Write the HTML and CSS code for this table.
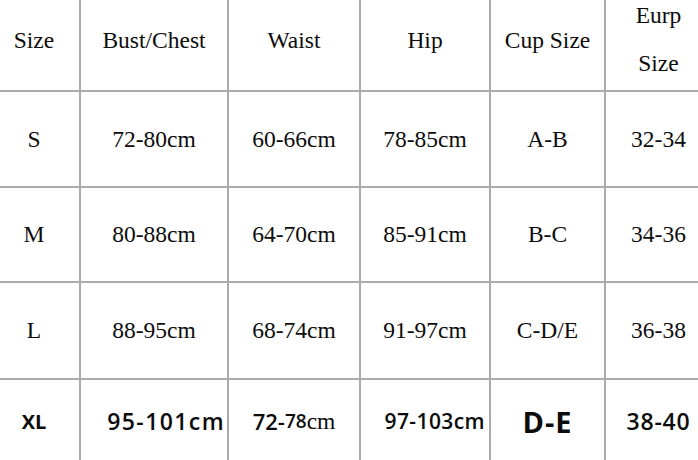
FILE: index.html
```html
<!DOCTYPE html>
<html>
<head>
<meta charset="utf-8">
<link rel="stylesheet" href="styles.css">
</head>
<body>
<div class="table">
  <div class="cell head c1">Size</div>
  <div class="cell head">Bust/Chest</div>
  <div class="cell head">Waist</div>
  <div class="cell head">Hip</div>
  <div class="cell head">Cup Size</div>
  <div class="cell head c6 two">Eurp<br>Size</div>

  <div class="cell c1">S</div>
  <div class="cell">72-80cm</div>
  <div class="cell">60-66cm</div>
  <div class="cell">78-85cm</div>
  <div class="cell">A-B</div>
  <div class="cell c6">32-34</div>

  <div class="cell c1">M</div>
  <div class="cell">80-88cm</div>
  <div class="cell">64-70cm</div>
  <div class="cell">85-91cm</div>
  <div class="cell">B-C</div>
  <div class="cell c6">34-36</div>

  <div class="cell c1">L</div>
  <div class="cell">88-95cm</div>
  <div class="cell">68-74cm</div>
  <div class="cell">91-97cm</div>
  <div class="cell">C-D/E</div>
  <div class="cell c6">36-38</div>

  <div class="cell last c1"><span class="xl">XL</span></div>
  <div class="cell last bust-xl"><span class="sans big">95-101cm</span></div>
  <div class="cell last"><span class="sans mid">72-</span><span class="sans small">78</span><span>cm</span></div>
  <div class="cell last hip-xl"><span class="sans hip">97-103cm</span></div>
  <div class="cell last"><span class="sans de">D-E</span></div>
  <div class="cell last c6"><span class="sans eu">38-40</span></div>
</div>
</body>
</html>
```

FILE: styles.css
```css
html, body {
  margin: 0;
  padding: 0;
  background: #ffffff;
}

body {
  width: 698px;
  height: 460px;
  overflow: hidden;
}

.table {
  display: grid;
  grid-template-columns: 81px 148px 132px 130px 115px 1fr;
  grid-template-rows: 92px 96px 95px 97px 1fr;
  width: 698px;
  height: 460px;
  font-family: "Liberation Serif", "Times New Roman", serif;
  font-size: 23.5px;
  color: #0c0c0c;
}

.cell {
  box-sizing: border-box;
  display: flex;
  align-items: center;
  justify-content: center;
  border-right: 2px solid #ababab;
  border-bottom: 2px solid #ababab;
  white-space: nowrap;
  text-align: center;
}

.c1 {
  padding-right: 11px;
}

.c6 {
  border-right: none;
  padding-left: 13px;
}

.head {
  padding-bottom: 9px;
}

.two {
  line-height: 48px;
  padding-bottom: 12px;
}

.last {
  border-bottom: none;
  padding-top: 2px;
}

.sans {
  font-family: "Open Sans", "Noto Sans", sans-serif;
}

.xl {
  font-family: "Open Sans", "Noto Sans", sans-serif;
  font-weight: 700;
  font-size: 20px;
}

.big {
  font-size: 23px;
  font-weight: 600;
  letter-spacing: 1.4px;
}

.bust-xl {
  justify-content: flex-end;
  padding-right: 2px;
}

.mid {
  font-size: 22px;
  font-weight: 600;
}

.small {
  font-size: 19px;
  font-weight: 600;
}

.hip {
  font-size: 21px;
  font-weight: 600;
  letter-spacing: 0.4px;
}

.hip-xl {
  justify-content: flex-end;
  padding-right: 4px;
}

.de {
  font-size: 29px;
  font-weight: 700;
  letter-spacing: 1px;
}

.eu {
  font-size: 23px;
  font-weight: 600;
  letter-spacing: 0.8px;
}
```
